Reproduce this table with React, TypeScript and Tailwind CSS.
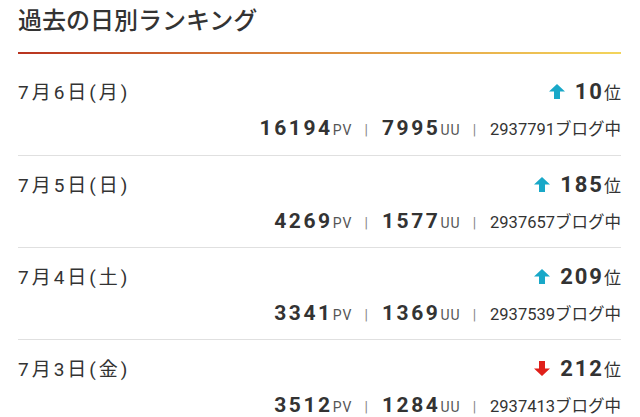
import React from "react";

type Row = {
  date: string;
  up: boolean;
  rank: string;
  pv: string;
  uu: string;
  total: string;
};

const rows: Row[] = [
  { date: "7月6日(月)", up: true, rank: "10", pv: "16194", uu: "7995", total: "2937791" },
  { date: "7月5日(日)", up: true, rank: "185", pv: "4269", uu: "1577", total: "2937657" },
  { date: "7月4日(土)", up: true, rank: "209", pv: "3341", uu: "1369", total: "2937539" },
  { date: "7月3日(金)", up: false, rank: "212", pv: "3512", uu: "1284", total: "2937413" },
];

function Arrow({ up }: { up: boolean }) {
  return (
    <svg
      width="16"
      height="15"
      viewBox="0 0 16 15"
      className="mr-[10px] self-center"
      style={{ transform: up ? undefined : "rotate(180deg)" }}
    >
      <polygon
        points="8,0 16,7.5 11,7.5 11,15 5,15 5,7.5 0,7.5"
        fill={up ? "#19a8c8" : "#e0201a"}
      />
    </svg>
  );
}

function Sep() {
  return <span className="ml-[12px] mr-[14px] text-[14px] text-[#888]">|</span>;
}

export default function App() {
  return (
    <div
      className="w-[640px] bg-white px-[18px] pr-[19px] text-[#333]"
      style={{ fontFamily: "Roboto, 'Noto Sans CJK JP', sans-serif" }}
    >
      <div className="h-[52px] text-[24px] font-medium leading-[42px] text-[#333]">過去の日別ランキング</div>
      <div className="h-[2px] bg-linear-to-r from-[#b8321f] via-[#dc8c3c] to-[#f3d55c]" />
      <div className="mt-[9px]">
        {rows.map((r, i) => (
          <div
            key={r.date}
            className={
              i === 0
                ? "border-b border-[#e0e0e0] pt-[12px] pb-[12px]"
                : "border-b border-[#e0e0e0] pt-[12px] pb-[11px]"
            }
          >
            <div className="flex h-[30px] items-baseline justify-between">
              <span className="text-[19px] tracking-[3px]">{r.date}</span>
              <span className="flex items-baseline">
                <Arrow up={r.up} />
                <span className="text-[22px] font-bold tracking-[2px]">{r.rank}</span>
                <span className="text-[17px]">位</span>
              </span>
            </div>
            <div className="mt-[8px] flex h-[30px] items-baseline justify-end">
              <span className="text-[21px] font-bold tracking-[2.6px]">{r.pv}</span>
              <span className="text-[14px] tracking-[1px] text-[#555]">PV</span>
              <Sep />
              <span className="text-[21px] font-bold tracking-[2.6px]">{r.uu}</span>
              <span className="text-[14px] tracking-[1px] text-[#555]">UU</span>
              <Sep />
              <span className="text-[16.5px]">{r.total}ブログ中</span>
            </div>
          </div>
        ))}
      </div>
    </div>
  );
}
